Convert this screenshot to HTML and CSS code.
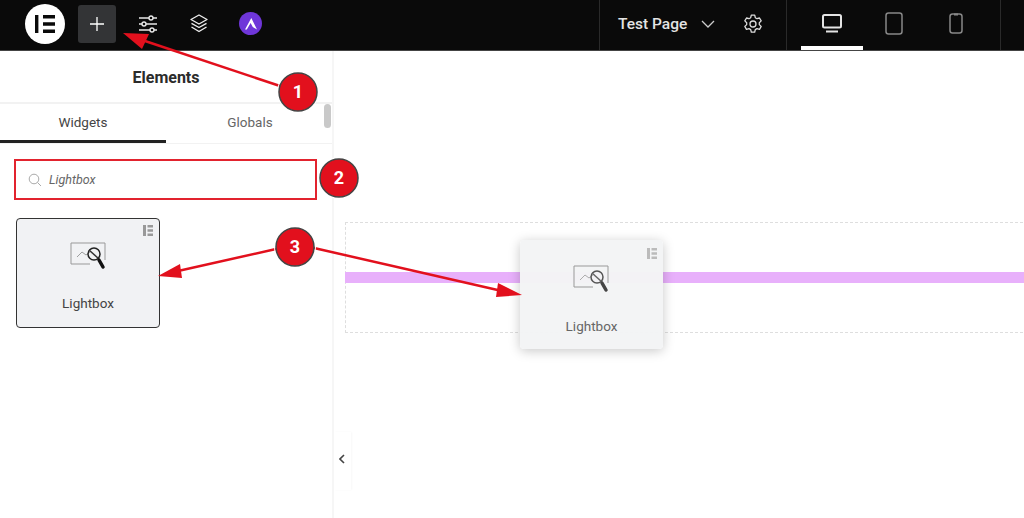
FILE: index.html
```html
<!DOCTYPE html>
<html lang="en">
<head>
    <meta charset="UTF-8">
    <meta name="viewport" content="width=device-width, initial-scale=1.0">
    <title>Test Page</title>
    <link rel="stylesheet" href="styles.css">
</head>
<body>
    <header class="topbar">
        <div class="topbar-left">
            <div class="logo">
                <svg width="22" height="18" viewBox="0 0 22 18"><path d="M1 0h3.4v18H1zM9 0h12v3.4H9zM9 7.3h12v3.4H9zM9 14.6h12V18H9z" fill="#0a0a0a"/></svg>
            </div>
            <button class="add-btn">
                <svg width="16" height="16" viewBox="0 0 16 16"><path d="M8 1v14M1 8h14" stroke="#fff" stroke-width="1.300" fill="none"/></svg>
            </button>
            <div class="tool tool-sliders">
                <svg width="20" height="18" viewBox="0 0 20 18" fill="none" stroke="#e8e8e8" stroke-width="1.4"><path d="M1 3h10M15 3h4M1 9h3M8 9h11M1 15h11M16 15h3"/><circle cx="13" cy="3" r="2"/><circle cx="6" cy="9" r="2"/><circle cx="14" cy="15" r="2"/></svg>
            </div>
            <div class="tool tool-layers">
                <svg width="18" height="19" viewBox="0 0 18 19" fill="none" stroke="#eee" stroke-width="1.4" stroke-linejoin="round"><path d="M9 1l8 4.5L9 10 1 5.5z"/><path d="M1.5 9.3L9 13.5l7.500-4.200"/><path d="M1.500 13L9 17.500l7.500-4.500"/></svg>
            </div>
            <div class="tool tool-brand">
                <svg width="12" height="12" viewBox="0 0 12 12"><path d="M6.300 0L12 11.500 7.800 9 5.600 4.900 1.800 11.500H0z" fill="#fff"/></svg>
            </div>
        </div>
        <div class="topbar-right">
            <div class="page-menu">
                <span class="page-name">Test Page</span>
                <svg class="page-chevron" width="14" height="8" viewBox="0 0 14 8"><path d="M1 1l6 6 6-6" stroke="#ccc" stroke-width="1.300" fill="none"/></svg>
                <svg class="page-gear" width="20" height="20" viewBox="0 0 20 20" fill="none" stroke="#ddd" stroke-width="1.300" stroke-linejoin="round"><path d="M8.300 1.200h3.400l.6 2.500 1.700 1 2.500-.7 1.700 2.900-1.900 1.800v1.900l1.900 1.800-1.700 2.900-2.500-.7-1.700 1-.6 2.500H8.300l-.6-2.500-1.700-1-2.500.7-1.700-2.900 1.900-1.800V8.700L1.800 6.900l1.700-2.900 2.500.7 1.700-1z"/><circle cx="10" cy="10" r="3"/></svg>
            </div>
            <div class="devices">
                <div class="device device-active">
                    <svg width="20" height="19" viewBox="0 0 20 19" fill="none" stroke="#e4e4e4" stroke-width="2"><rect x="1" y="1" width="18" height="12.500" rx="1.500"/><path d="M4 17.500h12"/></svg>
                </div>
                <div class="device">
                    <svg width="18" height="23" viewBox="0 0 18 23" fill="none" stroke="#888" stroke-width="1.500"><rect x="1" y="1" width="16" height="21" rx="2.500"/></svg>
                </div>
                <div class="device">
                    <svg width="14" height="21" viewBox="0 0 14 21" fill="none" stroke="#888" stroke-width="1.500"><rect x="1" y="1" width="12" height="19" rx="2.500"/><path d="M5 1.500h4" stroke-width="2"/></svg>
                </div>
            </div>
        </div>
    </header>

    <main class="workspace">
        <aside class="panel">
            <h2 class="panel-title">Elements</h2>
            <div class="tabs">
                <div class="tab tab-active">Widgets</div>
                <div class="tab">Globals</div>
                <span class="scroll-thumb"></span>
            </div>
            <div class="panel-body">
                <div class="search">
                    <svg width="14" height="14" viewBox="0 0 14 14" fill="none" stroke="#aaa" stroke-width="1"><circle cx="6" cy="6" r="4.800"/><path d="M9.500 9.500l3.500 3.500"/></svg>
                    <span class="search-text">Lightbox</span>
                </div>
                <div class="widget-card">
                    <svg class="pro-mark" width="10" height="11" viewBox="0 0 10 11"><path d="M0 0h3v11H0zM4.500 0H10v2.500H4.500zM4.500 4.200H10v2.500H4.500zM4.500 8.500H10V11H4.500z" fill="#999"/></svg>
                    <svg class="widget-icon" width="37" height="29" viewBox="0 0 37 29" fill="none"><path d="M20 22H1V1h34v17" stroke="#999" stroke-width="1"/><path d="M7 15l5-5 4 3 4-3" stroke="#888" stroke-width=".8"/><circle cx="24" cy="12" r="6" stroke="#222" stroke-width="1.500"/><path d="M19 8l10 9" stroke="#333" stroke-width="1.500"/><path d="M29 18l4 7" stroke="#111" stroke-width="3.500" stroke-linecap="round"/></svg>
                    <span class="widget-name">Lightbox</span>
                </div>
            </div>
        </aside>
        <section class="canvas">
            <div class="dropzone">
                <div class="drop-line"></div>
            </div>
        </section>

        <div class="widget-card widget-card-drag">
            <svg class="pro-mark" width="10" height="11" viewBox="0 0 10 11"><path d="M0 0h3v11H0zM4.500 0H10v2.500H4.500zM4.500 4.200H10v2.500H4.500zM4.500 8.500H10V11H4.500z" fill="#bbb"/></svg>
            <svg class="widget-icon" width="37" height="29" viewBox="0 0 37 29" fill="none"><path d="M20 22H1V1h34v17" stroke="#999" stroke-width="1"/><path d="M7 15l5-5 4 3 4-3" stroke="#999" stroke-width=".8"/><circle cx="24" cy="12" r="6" stroke="#555" stroke-width="1.500"/><path d="M19 8l10 9" stroke="#666" stroke-width="1.500"/><path d="M29 18l4 7" stroke="#444" stroke-width="3.500" stroke-linecap="round"/></svg>
            <span class="widget-name">Lightbox</span>
        </div>

        <button class="collapse">
            <svg width="6" height="10" viewBox="0 0 6 10"><path d="M5 1L1 5l4 4" stroke="#444" stroke-width="1.600" fill="none"/></svg>
        </button>
    </main>

    <!-- numbered callouts drawn on top of the screenshot -->
    <svg class="callouts" width="1024" height="518" viewBox="0 0 1024 518">
        <g fill="#e2101d" stroke="#e2101d">
            <path d="M145 41L280 86" stroke-width="2.500" fill="none"/>
            <path d="M123 33L149 34 142 49z" stroke-width="0"/>
            <path d="M178 271L276 249" stroke-width="2.500" fill="none"/>
            <path d="M158 276L180 264 182 278z" stroke-width="0"/>
            <path d="M314 248L502 291" stroke-width="2.500" fill="none"/>
            <path d="M522 295L498 283 496 297z" stroke-width="0"/>
        </g>
        <g class="badge">
            <circle class="badge-ring" cx="298" cy="92" r="20.500"/>
            <circle cx="298" cy="92" r="19"/>
            <text x="298" y="98">1</text>
        </g>
        <g class="badge">
            <circle class="badge-ring" cx="339" cy="178" r="20.500"/>
            <circle cx="339" cy="178" r="19"/>
            <text x="339" y="184">2</text>
        </g>
        <g class="badge">
            <circle class="badge-ring" cx="295" cy="247" r="20.500"/>
            <circle cx="295" cy="247" r="19"/>
            <text x="295" y="253">3</text>
        </g>
    </svg>
</body>
</html>
```

FILE: styles.css
```css
* {
    box-sizing: border-box;
}

body {
    position: relative;
    width: 1024px;
    height: 518px;
    margin: 0;
    overflow: hidden;
    background: #fff;
    font-family: Roboto, "Liberation Sans", sans-serif;
    color: #222;
}

.topbar {
    display: flex;
    justify-content: space-between;
    height: 51px;
    background: #0a0a0a;
    border-bottom: 1px solid #444;
}

.topbar-left {
    display: flex;
    align-items: center;
    padding: 0 0 3px 25px;
}

.logo {
    display: flex;
    align-items: center;
    justify-content: center;
    width: 40px;
    height: 40px;
    margin-right: 13px;
    border-radius: 50%;
    background: #fff;
}

.add-btn {
    display: flex;
    align-items: center;
    justify-content: center;
    width: 38px;
    height: 38px;
    margin-right: 21px;
    padding: 0;
    border: none;
    border-radius: 3px;
    background: #333436;
}

.tool {
    display: flex;
    align-items: center;
    justify-content: center;
    width: 22px;
    height: 24px;
    margin-right: 29px;
}

.tool-brand {
    width: 23px;
    height: 23px;
    margin-right: 0;
    border-radius: 50%;
    background: #6f36d9;
}

.topbar-right {
    display: flex;
    height: 50px;
    margin-right: 23px;
}

.page-menu {
    display: flex;
    align-items: center;
    width: 188px;
    padding: 0 0 2px 18px;
    border-left: 1px solid #2a2a2a;
    border-right: 1px solid #2a2a2a;
}

.page-name {
    width: 83px;
    font-size: 15.5px;
    font-weight: 500;
    color: #e4e4e4;
}

.page-chevron {
    margin-right: 28px;
}

.devices {
    display: flex;
    width: 214px;
    padding-left: 14px;
    border-right: 1px solid #2a2a2a;
}

.device {
    display: flex;
    align-items: center;
    justify-content: center;
    width: 62px;
    border-bottom: 4px solid transparent;
}

.device-active {
    border-bottom-color: #fff;
}

.workspace {
    display: flex;
    height: 467px;
}

.panel {
    flex: none;
    width: 334px;
    border-right: 2px solid #f6f6f6;
}

.panel-title {
    margin: 0;
    padding: 17px 0 0 0;
    height: 53px;
    font-size: 16px;
    font-weight: 700;
    line-height: 19px;
    text-align: center;
    color: #2b2b2b;
    border-bottom: 2px solid #f2f2f2;
}

.tabs {
    position: relative;
    display: flex;
    height: 40px;
    border-bottom: 1px solid #f2f2f2;
}

.tab {
    width: 167px;
    height: 39px;
    padding-top: 10px;
    font-size: 13.5px;
    text-align: center;
    color: #666;
}

.tab-active {
    color: #444;
    border-bottom: 3px solid #222;
}

.tab:not(.tab-active) {
    padding-left: 2px;
}

.scroll-thumb {
    position: absolute;
    top: 0;
    left: 324px;
    width: 7px;
    height: 24px;
    border-radius: 4px;
    background: #c9c9c9;
}

.panel-body {
    padding: 15px 0 0 14px;
}

.search {
    display: flex;
    align-items: center;
    gap: 7px;
    width: 303px;
    height: 41px;
    padding-left: 12px;
    border: 2px solid #e2232e;
}

.search-text {
    font-size: 12.5px;
    font-style: italic;
    color: #666;
}

.widget-card {
    display: flex;
    flex-direction: column;
    align-items: center;
    width: 144px;
    height: 110px;
    margin: 18px 0 0 2px;
    padding: 6px 6px 0;
    border: 1px solid #333;
    border-radius: 4px;
    background: #f1f2f4;
}

.pro-mark {
    align-self: flex-end;
}

.widget-icon {
    margin: 6px 0 24px;
}

.widget-name {
    font-size: 13.5px;
    color: #444;
}

.widget-card-drag {
    position: absolute;
    top: 240px;
    left: 520px;
    width: 143px;
    height: 109px;
    margin: 0;
    padding-top: 8px;
    border: none;
    background: rgba(243, 244, 245, 0.97);
    box-shadow: 0 2px 12px rgba(0, 0, 0, 0.22);
}

.widget-card-drag .widget-name {
    color: #666;
}

.canvas {
    flex: 1;
    min-width: 0;
    padding: 171px 0 0 11px;
}

.dropzone {
    display: flex;
    align-items: center;
    height: 111px;
    margin-right: -4px;
    border: 1px dashed #dedede;
}

.drop-line {
    flex: none;
    width: 100%;
    height: 11px;
    margin: -1px 0 0 -1px;
    background: #e8b0fb;
}

.collapse {
    position: absolute;
    top: 432px;
    left: 334px;
    display: flex;
    align-items: center;
    justify-content: center;
    width: 17px;
    height: 58px;
    padding: 0 2px 4px 0;
    border: none;
    background: #fff;
    box-shadow: 1px 0 2px rgba(0, 0, 0, 0.03);
}

.callouts {
    position: absolute;
    top: 0;
    left: 0;
}

.badge circle {
    fill: #e2101d;
    stroke: #444;
    stroke-width: 1.500;
}

.badge .badge-ring {
    fill: none;
    stroke: #fff;
    stroke-width: 1;
}

.badge text {
    font-family: Roboto, "Liberation Sans", sans-serif;
    font-size: 18px;
    font-weight: 700;
    text-anchor: middle;
    fill: #fff;
}
```
